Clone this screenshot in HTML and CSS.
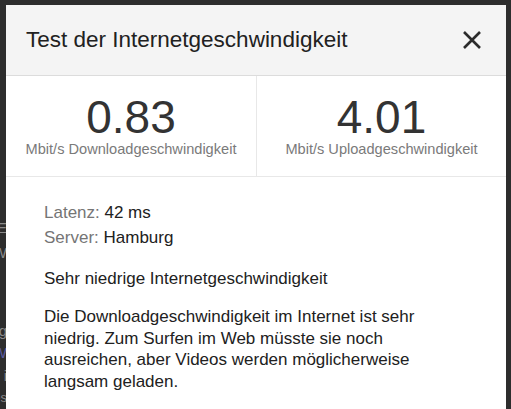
FILE: index.html
```html
<!DOCTYPE html>
<html lang="de">

<head>
  <meta charset="UTF-8">
  <title>Test der Internetgeschwindigkeit</title>
  <link rel="stylesheet" href="styles.css">
</head>

<body>
  <div class="backdrop">
    <p class="behind l1">E</p>
    <p class="behind l2">W</p>
    <p class="behind l3">g</p>
    <p class="behind l4 link">W</p>
    <p class="behind l5">i</p>
    <p class="behind l6">es</p>
  </div>

  <div class="dialog">
    <div class="dialog-header">
      <h2>Test der Internetgeschwindigkeit</h2>
      <button class="close" aria-label="Schließen">
        <svg width="20" height="18" viewBox="0 0 20 18">
          <path d="M2 1 L18 17 M18 1 L2 17" stroke="#2b2b2b" stroke-width="2.6" fill="none" />
        </svg>
      </button>
    </div>

    <div class="stats">
      <div class="stat">
        <div class="stat-value">0.83</div>
        <div class="stat-label">Mbit/s Downloadgeschwindigkeit</div>
      </div>
      <div class="stat">
        <div class="stat-value">4.01</div>
        <div class="stat-label">Mbit/s Uploadgeschwindigkeit</div>
      </div>
    </div>

    <div class="details">
      <div class="meta"><span class="key">Latenz:</span> 42 ms</div>
      <div class="meta"><span class="key">Server:</span> Hamburg</div>
      <p class="verdict">Sehr niedrige Internetgeschwindigkeit</p>
      <p class="explain">Die Downloadgeschwindigkeit im Internet ist sehr niedrig. Zum Surfen im Web müsste sie noch ausreichen, aber Videos werden möglicherweise langsam geladen.</p>
    </div>
  </div>
</body>

</html>
```

FILE: styles.css
```css
body {
  font-family: "Liberation Sans", Arial, sans-serif;
  margin: 0;
  padding: 0;
  background-color: #2d2d2d;
  height: 409px;
  overflow: hidden;
  position: relative;
}

.backdrop {
  position: absolute;
  left: 0;
  top: 0;
  width: 6px;
  height: 100%;
  overflow: hidden;
  color: #8a8a8a;
  font-size: 15px;
}

.behind {
  position: absolute;
  margin: 0;
  right: -1px;
  white-space: nowrap;
}

.l1 { top: 219px; }
.l2 { top: 244px; }
.l3 { top: 322px; }
.l4 { top: 344px; }
.l5 { top: 367px; }
.l6 { top: 390px; font-size: 13px; }

.link {
  color: #5a5aa0;
}

.dialog {
  position: relative;
  margin: 5px 5px 0 6px;
  background-color: #fff;
  height: 420px;
}

.dialog-header {
  height: 70px;
  background-color: #f4f4f4;
  border-bottom: 1px solid #dcdcdc;
  display: flex;
  align-items: center;
  justify-content: space-between;
  padding: 0 24px 0 20px;
}

.dialog-header h2 {
  margin: 0;
  font-size: 22.5px;
  font-weight: normal;
  color: #212121;
}

.close {
  border: none;
  background: none;
  padding: 0;
  width: 20px;
  height: 18px;
  cursor: pointer;
  display: flex;
}

.stats {
  display: grid;
  grid-template-columns: 1fr 1fr;
  border-bottom: 1px solid #e8e8e8;
}

.stat {
  text-align: center;
  padding: 19px 0 17px;
}

.stat + .stat {
  border-left: 1px solid #e8e8e8;
}

.stat-value {
  font-size: 46px;
  line-height: 44px;
  color: #333;
}

.stat-label {
  font-size: 14.6px;
  line-height: 20px;
  color: #7a7a7a;
}

.details {
  padding: 23px 42px 24px 38px;
  font-size: 17px;
  color: #212121;
}

.meta {
  line-height: 25px;
}

.key {
  color: #757575;
}

.verdict {
  margin: 18px 0 0;
  line-height: 22px;
}

.explain {
  margin: 16px 0 0;
  line-height: 21.7px;
}
```
